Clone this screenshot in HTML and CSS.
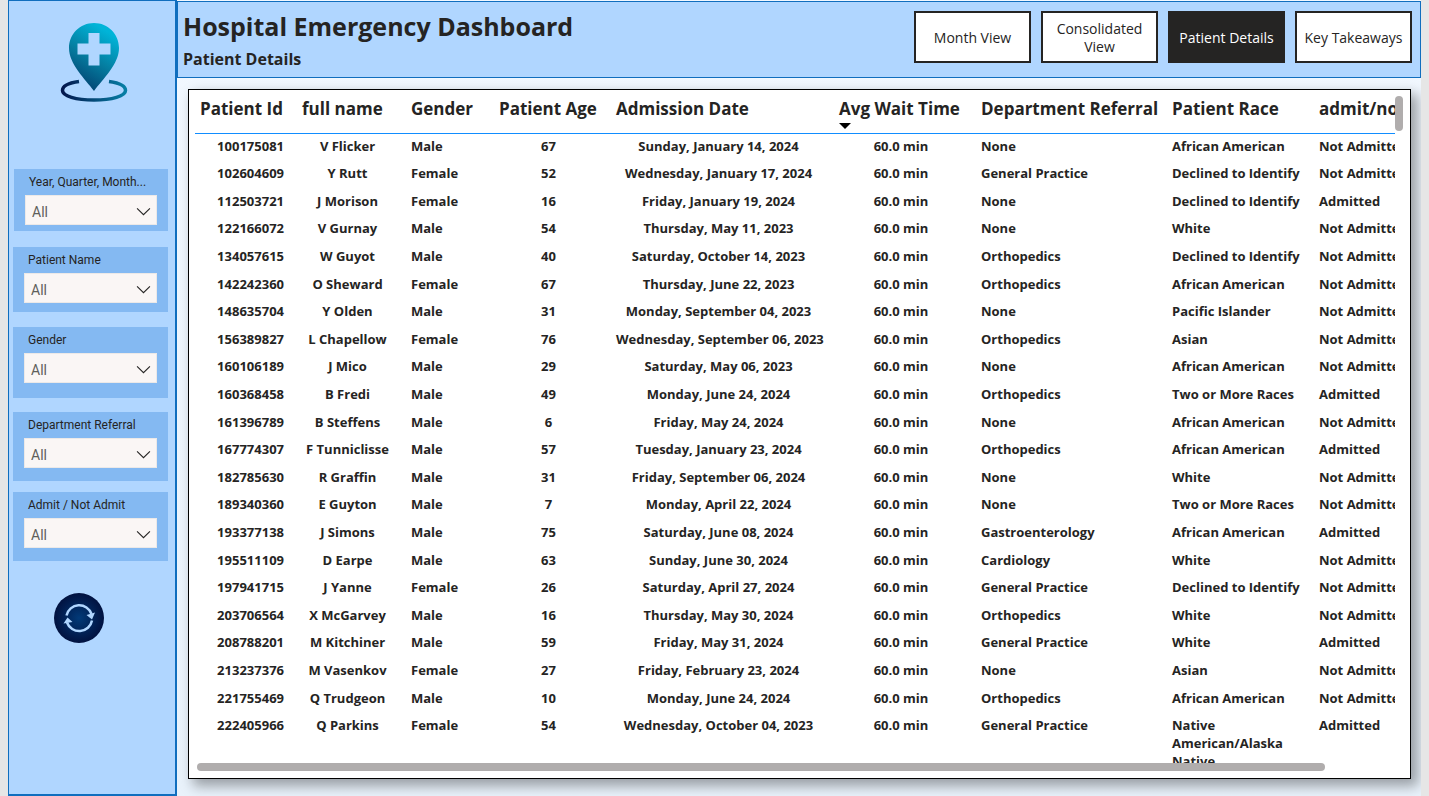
FILE: index.html
```html
<!DOCTYPE html>
<html lang="en">
<head>
<meta charset="utf-8">
<title>Hospital Emergency Dashboard</title>
<link rel="stylesheet" href="styles.css">
</head>
<body>
<div class="page">
  <aside class="sidebar">
    <svg class="logo" viewBox="0 0 70 82" role="img" aria-label="Hospital location">
      <defs>
        <linearGradient id="pin" x1="0.75" y1="0" x2="0.3" y2="1">
          <stop offset="0.1" stop-color="#00b4d8"/><stop offset="0.55" stop-color="#057c9f"/><stop offset="1" stop-color="#023e6e"/>
        </linearGradient>
        <linearGradient id="ring" x1="0" y1="0" x2="1" y2="0">
          <stop offset="0" stop-color="#03174d"/><stop offset="1" stop-color="#067fa5"/>
        </linearGradient>
      </defs>
      <path fill="url(#pin)" fill-rule="evenodd" d="M35 1C21 1 10 12 10 26C10 42 26 57 35 69C44 57 60 42 60 26C60 12 49 1 35 1ZM29.500 11H40.500V21.500H51.500V32.500H40.500V43.500H29.500V32.500H18.500V21.500H29.500Z"/>
      <path fill="none" stroke="url(#ring)" stroke-width="3.500" d="M20 59.500C9 61 3.500 64.500 3.500 68.500C3.500 74 17 78 35 78C53 78 66.500 74 66.500 68.500C66.500 64.500 61 61 50 59.500"/>
    </svg>

    <form class="slicers">
      <div class="slicer slicer-date">
        <label for="date">Year, Quarter, Month...</label>
        <div class="picker"><select id="date"><option>All</option></select><svg viewBox="0 0 14 8"><path d="M1 1L7 7L13 1"/></svg></div>
      </div>
      <div class="slicer slicer-name">
        <label for="name">Patient Name</label>
        <div class="picker"><select id="name"><option>All</option></select><svg viewBox="0 0 14 8"><path d="M1 1L7 7L13 1"/></svg></div>
      </div>
      <div class="slicer slicer-gender">
        <label for="gender">Gender</label>
        <div class="picker"><select id="gender"><option>All</option></select><svg viewBox="0 0 14 8"><path d="M1 1L7 7L13 1"/></svg></div>
      </div>
      <div class="slicer slicer-dept">
        <label for="dept">Department Referral</label>
        <div class="picker"><select id="dept"><option>All</option></select><svg viewBox="0 0 14 8"><path d="M1 1L7 7L13 1"/></svg></div>
      </div>
      <div class="slicer slicer-admit">
        <label for="admit">Admit / Not Admit</label>
        <div class="picker"><select id="admit"><option>All</option></select><svg viewBox="0 0 14 8"><path d="M1 1L7 7L13 1"/></svg></div>
      </div>
    </form>

    <button class="refresh" type="button" aria-label="Reset filters">
      <svg viewBox="0 0 52 52">
        <defs><radialGradient id="disc"><stop offset="0" stop-color="#023a78"/><stop offset="1" stop-color="#011240"/></radialGradient></defs>
        <circle cx="26" cy="26" r="25" fill="url(#disc)"/>
        <g fill="none" stroke="#b0d6ff" stroke-width="2.500">
          <path d="M13.500 23.500A13 13 0 0 1 38.500 22"/>
          <path d="M39 28.500A13 13 0 0 1 14 30.500"/>
        </g>
        <path fill="#b0d6ff" d="M33.500 23L42 20.500L39 27.500ZM19.500 30L10.500 31.500L14.500 25.500Z"/>
      </svg>
    </button>
  </aside>

  <main class="main">
    <header class="topbar">
      <div class="titles">
        <h1>Hospital Emergency Dashboard</h1>
        <h2>Patient Details</h2>
      </div>
      <nav class="tabs">
        <button type="button">Month View</button>
        <button type="button">Consolidated View</button>
        <button type="button" class="active" aria-current="page">Patient Details</button>
        <button type="button">Key Takeaways</button>
      </nav>
    </header>

    <section class="card">
      <div class="viewport">
        <table>
          <colgroup><col class="c-id"><col class="c-name"><col class="c-gender"><col class="c-age"><col class="c-date"><col class="c-wait"><col class="c-dept"><col class="c-race"><col class="c-admit"></colgroup>
          <thead>
            <tr><th>Patient Id<th>full name<th>Gender<th>Patient Age<th>Admission Date<th aria-sort="descending">Avg Wait Time<svg class="sort" viewBox="0 0 12 6"><path d="M0 0H12L6 6Z"/></svg><th>Department Referral<th>Patient Race<th>admit/not admit</tr>
          </thead>
          <tbody>
            <tr><td>100175081<td>V Flicker<td>Male<td>67<td>Sunday, January 14, 2024<td>60.0 min<td>None<td>African American<td>Not Admitted</tr>
            <tr><td>102604609<td>Y Rutt<td>Female<td>52<td>Wednesday, January 17, 2024<td>60.0 min<td>General Practice<td>Declined to Identify<td>Not Admitted</tr>
            <tr><td>112503721<td>J Morison<td>Female<td>16<td>Friday, January 19, 2024<td>60.0 min<td>None<td>Declined to Identify<td>Admitted</tr>
            <tr><td>122166072<td>V Gurnay<td>Male<td>54<td>Thursday, May 11, 2023<td>60.0 min<td>None<td>White<td>Not Admitted</tr>
            <tr><td>134057615<td>W Guyot<td>Male<td>40<td>Saturday, October 14, 2023<td>60.0 min<td>Orthopedics<td>Declined to Identify<td>Not Admitted</tr>
            <tr><td>142242360<td>O Sheward<td>Female<td>67<td>Thursday, June 22, 2023<td>60.0 min<td>Orthopedics<td>African American<td>Not Admitted</tr>
            <tr><td>148635704<td>Y Olden<td>Male<td>31<td>Monday, September 04, 2023<td>60.0 min<td>None<td>Pacific Islander<td>Not Admitted</tr>
            <tr><td>156389827<td>L Chapellow<td>Female<td>76<td>Wednesday, September 06, 2023<td>60.0 min<td>Orthopedics<td>Asian<td>Not Admitted</tr>
            <tr><td>160106189<td>J Mico<td>Male<td>29<td>Saturday, May 06, 2023<td>60.0 min<td>None<td>African American<td>Not Admitted</tr>
            <tr><td>160368458<td>B Fredi<td>Male<td>49<td>Monday, June 24, 2024<td>60.0 min<td>Orthopedics<td>Two or More Races<td>Admitted</tr>
            <tr><td>161396789<td>B Steffens<td>Male<td>6<td>Friday, May 24, 2024<td>60.0 min<td>None<td>African American<td>Not Admitted</tr>
            <tr><td>167774307<td>F Tunniclisse<td>Male<td>57<td>Tuesday, January 23, 2024<td>60.0 min<td>Orthopedics<td>African American<td>Admitted</tr>
            <tr><td>182785630<td>R Graffin<td>Male<td>31<td>Friday, September 06, 2024<td>60.0 min<td>None<td>White<td>Not Admitted</tr>
            <tr><td>189340360<td>E Guyton<td>Male<td>7<td>Monday, April 22, 2024<td>60.0 min<td>None<td>Two or More Races<td>Not Admitted</tr>
            <tr><td>193377138<td>J Simons<td>Male<td>75<td>Saturday, June 08, 2024<td>60.0 min<td>Gastroenterology<td>African American<td>Admitted</tr>
            <tr><td>195511109<td>D Earpe<td>Male<td>63<td>Sunday, June 30, 2024<td>60.0 min<td>Cardiology<td>White<td>Not Admitted</tr>
            <tr><td>197941715<td>J Yanne<td>Female<td>26<td>Saturday, April 27, 2024<td>60.0 min<td>General Practice<td>Declined to Identify<td>Not Admitted</tr>
            <tr><td>203706564<td>X McGarvey<td>Male<td>16<td>Thursday, May 30, 2024<td>60.0 min<td>Orthopedics<td>White<td>Not Admitted</tr>
            <tr><td>208788201<td>M Kitchiner<td>Male<td>59<td>Friday, May 31, 2024<td>60.0 min<td>General Practice<td>White<td>Admitted</tr>
            <tr><td>213237376<td>M Vasenkov<td>Female<td>27<td>Friday, February 23, 2024<td>60.0 min<td>None<td>Asian<td>Not Admitted</tr>
            <tr><td>221755469<td>Q Trudgeon<td>Male<td>10<td>Monday, June 24, 2024<td>60.0 min<td>Orthopedics<td>African American<td>Not Admitted</tr>
            <tr><td>222405966<td>Q Parkins<td>Female<td>54<td>Wednesday, October 04, 2023<td>60.0 min<td>General Practice<td>Native American/Alaska Native<td>Admitted</tr>
          </tbody>
        </table>
      </div>
      <div class="vbar"></div>
      <div class="hbar"></div>
    </section>
  </main>
</div>
</body>
</html>
```
FILE: styles.css
```css
* { box-sizing: border-box; }

body {
  margin: 0;
  background: #e6e6e6;
  color: #252423;
  font-family: "Open Sans", "Noto Sans", sans-serif;
}

.page {
  display: flex;
  height: 100vh;
  margin: 0 8px;
  background: linear-gradient(#f2f8ff, #e9f2fb);
  overflow: hidden;
}

/* Sidebar */
.sidebar {
  flex: 0 0 169px;
  display: flex;
  flex-direction: column;
  border: 1px solid #106ebe;
  border-right-width: 2px;
  border-bottom-width: 2px;
  background: #b0d6ff;
}

.logo {
  width: 70px;
  height: 82px;
  margin: 21px 0 0 50px;
}

.slicers {
  display: flex;
  flex-direction: column;
  margin: 65px 7px 0 4px;
}

.slicer {
  padding: 5px 11px 0;
  background: #84b9f2;
}

.slicer-date { height: 62px; margin-bottom: 16px; margin-left: 1px; }
.slicer-name { height: 65px; margin-bottom: 15px; }
.slicer-gender { height: 71px; margin-bottom: 14px; }
.slicer-dept { height: 69px; margin-bottom: 11px; }
.slicer-admit { height: 69px; }

.slicer label {
  display: block;
  height: 21px;
  padding-left: 4px;
  font: 12px/16px Roboto, sans-serif;
  white-space: nowrap;
}

.picker { position: relative; }

.picker select {
  display: block;
  width: 100%;
  height: 30px;
  padding: 4px 6px 0;
  border: 1px solid #ece9e8;
  border-radius: 0;
  background: #faf6f5;
  color: #605e5c;
  font: 14px/18px Roboto, sans-serif;
  appearance: none;
}

.picker svg {
  position: absolute;
  right: 6px;
  top: 12px;
  width: 15px;
  height: 9px;
  fill: none;
  stroke: #252423;
  pointer-events: none;
}

.refresh {
  width: 52px;
  height: 52px;
  margin: 31px 0 0 44px;
  padding: 0;
  border: 0;
  background: none;
}

.refresh svg { display: block; }

/* Main column */
.main {
  flex: 1;
  min-width: 0;
  display: flex;
  flex-direction: column;
  padding-top: 1px;
}

.topbar {
  display: flex;
  justify-content: space-between;
  min-height: 77px;
  padding: 9px 8px 0 5px;
  border: 1px solid #106ebe;
  background: #b0d6ff;
}

h1, h2 { margin: 0; font-weight: 700; }
h1 { font-size: 25px; line-height: 30px; }
h2 { margin-top: 6px; font-size: 16px; line-height: 24px; }

.tabs { display: flex; gap: 10px; }

.tabs button {
  width: 117px;
  height: 52px;
  padding: 2px 4px 0;
  border: 2px solid #252423;
  background: #fff;
  color: #252423;
  font: 14px/18px "Open Sans", sans-serif;
}

.tabs .active { background: #252423; color: #fff; }

/* Table card */
.card {
  flex: 1;
  min-height: 0;
  display: grid;
  grid-template-columns: minmax(0, 1fr) 8px;
  grid-template-rows: minmax(0, 1fr) 8px;
  margin: 11px 10px 17px 11px;
  padding: 6px 7px 7px 6px;
  border: 1px solid #000;
  background: #fff;
  box-shadow: 6px 6px 12px 1px rgba(0, 0, 0, 0.35);
}

.viewport { overflow: hidden; }

table {
  width: 1273px;
  table-layout: fixed;
  border-collapse: separate;
  border-spacing: 0;
  font-size: 13px;
  line-height: 18px;
  font-weight: 700;
}

.c-id { width: 102px; }
.c-name { width: 109px; }
.c-gender { width: 88px; }
.c-age { width: 117px; }
.c-date { width: 223px; }
.c-wait { width: 142px; }
.c-dept { width: 191px; }
.c-race { width: 147px; }
.c-admit { width: 154px; }

th {
  height: 38px;
  padding: 0 0 0 5px;
  border-bottom: 1px solid #118dff;
  font-size: 17px;
  line-height: 26px;
  text-align: left;
  vertical-align: top;
  white-space: nowrap;
}

.sort { display: block; width: 12px; height: 6px; margin-top: 1px; }

td {
  height: 28px;
  padding: 3px 13px 4px 5px;
  vertical-align: top;
}

tr:nth-child(5n + 1) td, tr:nth-child(5n + 3) td { height: 27px; }

td:nth-child(1) { text-align: right; }
td:nth-child(2), td:nth-child(4), td:nth-child(5), td:nth-child(6) { text-align: center; white-space: nowrap; }
td:nth-child(9) { white-space: nowrap; }

.vbar {
  width: 8px;
  height: 35px;
  border-radius: 4px;
  background: #b0adad;
}

.hbar {
  width: 94%;
  height: 8px;
  margin-left: 2px;
  border-radius: 4px;
  background: #b0adad;
}
```
